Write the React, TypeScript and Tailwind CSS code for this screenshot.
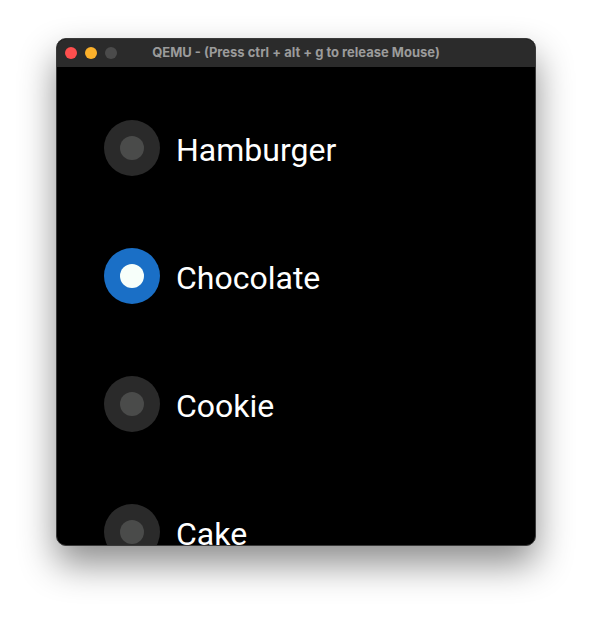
import React, { useState } from "react";

const options = ["Hamburger", "Chocolate", "Cookie", "Cake"];

const Radio: React.FC<{ checked: boolean; label: string; onPick: () => void }> = ({
  checked,
  label,
  onPick,
}) => {
  return (
    <button onClick={onPick} className="flex items-center gap-4 h-14 text-left">
      <span
        className={
          checked
            ? "w-14 h-14 rounded-full bg-[#1a6fc6] flex items-center justify-center shrink-0"
            : "w-14 h-14 rounded-full bg-[#2a2a2a] flex items-center justify-center shrink-0"
        }
      >
        <span
          className={
            checked ? "w-6 h-6 rounded-full bg-[#f7fffa]" : "w-6 h-6 rounded-full bg-[#4a4b4a]"
          }
        />
      </span>
      <span className="text-[32px] leading-none text-white pt-[3px]">{label}</span>
    </button>
  );
};

const App: React.FC = () => {
  const [picked, setPicked] = useState(1);

  return (
    <div
      className="w-[592px] h-[620px] bg-white pt-[38px] pl-[56px]"
      style={{ fontFamily: "Roboto, 'Liberation Sans', sans-serif" }}
    >
      <div className="w-[480px] h-[508px] rounded-[10px] overflow-hidden bg-black flex flex-col border border-[#3a3a3a] shadow-[0_18px_36px_rgba(0,0,0,0.45)]">
        <div className="h-[28px] bg-[#2b2b2b] flex items-center relative shrink-0">
          <div className="flex gap-2 pl-2 absolute left-0 top-0 h-full items-center">
            <span className="w-3 h-3 rounded-full bg-[#fe4f4e]" />
            <span className="w-3 h-3 rounded-full bg-[#fcb12b]" />
            <span className="w-3 h-3 rounded-full bg-[#4b4b4b]" />
          </div>
          <div
            className="w-full text-center text-[13px] font-bold text-[#9b9b9b]"
            style={{ fontFamily: "Inter, 'Liberation Sans', sans-serif" }}
          >
            QEMU - (Press ctrl + alt + g to release Mouse)
          </div>
        </div>
        <div className="flex-1 flex flex-col gap-[72px] pt-[53px] pl-[47px]">
          {options.map((o, i) => (
            <Radio key={o} label={o} checked={picked === i} onPick={() => setPicked(i)} />
          ))}
        </div>
      </div>
    </div>
  );
};

export default App;
